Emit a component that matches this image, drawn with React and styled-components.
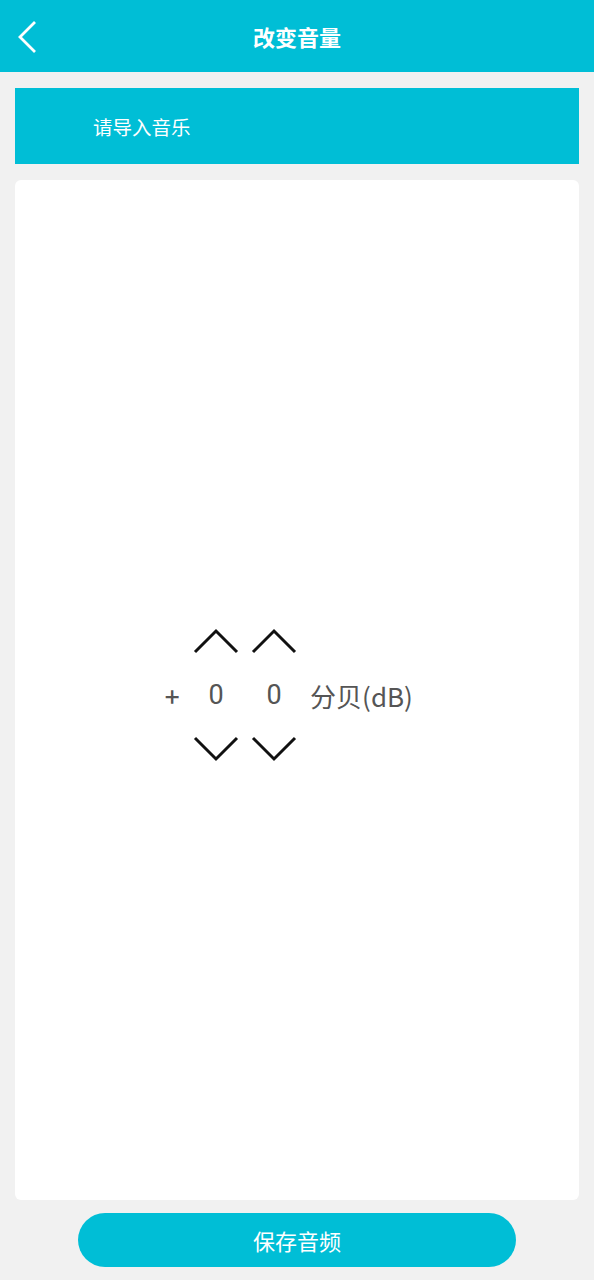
import styled, { createGlobalStyle } from "styled-components";

const CYAN = "#00bed6";

const Global = createGlobalStyle`
  html, body { margin: 0; padding: 0; }
  body {
    background: #f1f1f1;
    font-family: "Noto Sans CJK SC", "Noto Sans", sans-serif;
  }
`;

const Page = styled.div`
  width: 594px;
  height: 1280px;
  display: flex;
  flex-direction: column;
  background: #f1f1f1;
`;

const Header = styled.header`
  height: 72px;
  background: ${CYAN};
  display: flex;
  align-items: center;
  justify-content: center;
  position: relative;
`;

const BackButton = styled.button`
  position: absolute;
  left: 12px;
  top: 18px;
  width: 30px;
  height: 38px;
  border: 0;
  padding: 0;
  background: none;
  display: flex;
  align-items: center;
  justify-content: center;
`;

const Title = styled.h1`
  margin: 0;
  color: #fff;
  font-size: 22px;
  font-weight: 700;
`;

const Body = styled.main`
  flex: 1;
  display: flex;
  flex-direction: column;
  padding: 16px 15px 0;
  gap: 16px;
`;

const ImportBar = styled.div`
  height: 76px;
  background: ${CYAN};
  display: flex;
  align-items: center;
  padding-left: 78px;
  color: #fff;
  font-size: 19.5px;
`;

const Card = styled.section`
  height: 1020px;
  background: #fff;
  border-radius: 6px;
  display: flex;
  align-items: center;
  justify-content: center;
  padding-right: 17px;
  padding-top: 10px;
  box-sizing: border-box;
`;

const Control = styled.div`
  display: flex;
  align-items: center;
  gap: 14px;
  color: #555;
`;

const Plus = styled.span`
  font-size: 26px;
  font-weight: 500;
  width: 16px;
  text-align: center;
`;

const DigitCol = styled.div`
  width: 44px;
  display: flex;
  flex-direction: column;
  align-items: center;
  gap: 25px;
`;

const Digit = styled.span`
  font-size: 27px;
  line-height: 32px;
  font-family: "Roboto", sans-serif;
`;

const Unit = styled.span`
  font-size: 26px;
`;

const Arrow = ({ up }) => (
  <svg width="46" height="26" viewBox="0 0 46 26">
    <polyline
      points={up ? "2,24 23,3 44,24" : "2,2 23,23 44,2"}
      fill="none"
      stroke="#111"
      strokeWidth="3"
    />
  </svg>
);

const Footer = styled.div`
  height: 80px;
  display: flex;
  align-items: center;
  justify-content: center;
`;

const SaveButton = styled.button`
  width: 438px;
  height: 54px;
  border: 0;
  border-radius: 27px;
  background: ${CYAN};
  color: #fff;
  font-size: 22px;
  font-family: inherit;
`;

export default function App() {
  return (
    <Page>
      <Global />
      <Header>
        <BackButton>
          <svg width="24" height="36" viewBox="0 0 24 36">
            <polyline points="20,3 5,18 20,33" fill="none" stroke="#fff" strokeWidth="2.8" />
          </svg>
        </BackButton>
        <Title>改变音量</Title>
      </Header>
      <Body>
        <ImportBar>请导入音乐</ImportBar>
        <Card>
          <Control>
            <Plus>+</Plus>
            {[0, 0].map((d, i) => (
              <DigitCol key={i}>
                <Arrow up />
                <Digit>{d}</Digit>
                <Arrow />
              </DigitCol>
            ))}
            <Unit>分贝(dB)</Unit>
          </Control>
        </Card>
      </Body>
      <Footer>
        <SaveButton>保存音频</SaveButton>
      </Footer>
    </Page>
  );
}
